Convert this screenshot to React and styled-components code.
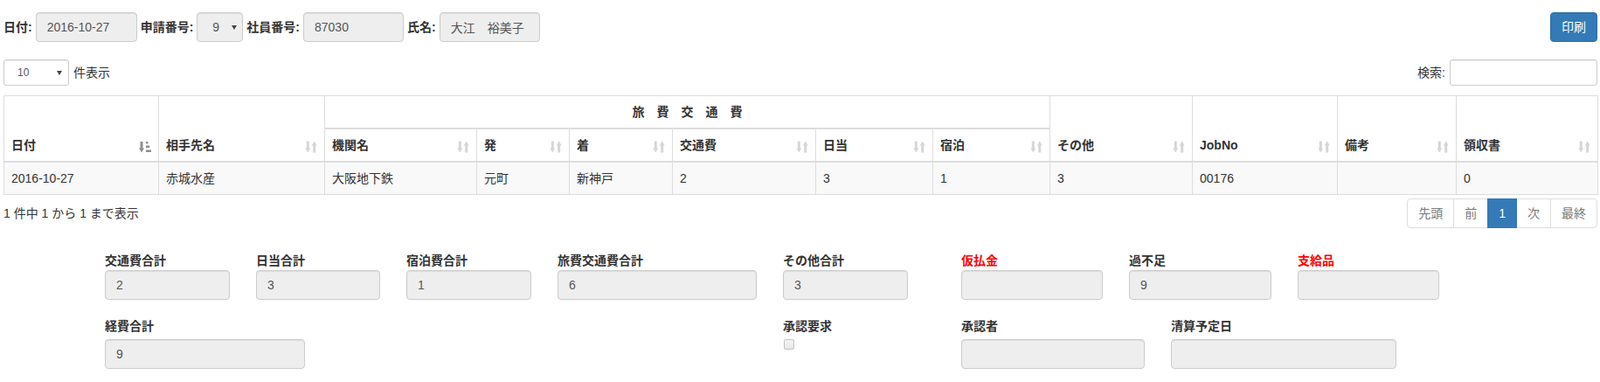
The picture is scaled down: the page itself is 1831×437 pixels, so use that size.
import React from "react";
import styled, { createGlobalStyle } from "styled-components";

const GlobalStyle = createGlobalStyle`
  html, body { margin: 0; padding: 0; background: #fff; }
  body {
    font-family: "Liberation Sans", "Noto Sans CJK JP", sans-serif;
    font-size: 14px;
    line-height: 20px;
    color: #333;
  }
  * { box-sizing: border-box; }
`;

const Page = styled.div`
  padding: 14px 3px 0 4px;
  width: 1831px;
`;

const TopBar = styled.div`
  display: flex;
  align-items: center;
  gap: 4px;
  height: 34px;
`;

const InlineLabel = styled.label`
  font-weight: bold;
  white-space: nowrap;
`;

const TextBox = styled.input`
  width: ${(p) => p.$w}px;
  height: ${(p) => (p.$sm ? 30 : 34)}px;
  padding: 6px 12px;
  font-family: inherit;
  font-size: 14px;
  line-height: 20px;
  color: #555;
  background: ${(p) => (p.$white ? "#fff" : "#eee")};
  border: 1px solid #ccc;
  border-radius: ${(p) => (p.$sm ? 3 : 4)}px;
  box-shadow: inset 0 1px 1px rgba(0, 0, 0, 0.075);
  outline: none;
  display: block;
`;

const SelectWrap = styled.div`
  position: relative;
  width: ${(p) => p.$w}px;
  height: ${(p) => p.$h}px;
`;

const Select = styled.select`
  appearance: none;
  -webkit-appearance: none;
  width: 100%;
  height: 100%;
  padding: 0 0 0 ${(p) => p.$pl}px;
  font-family: inherit;
  font-size: ${(p) => p.$fs}px;
  color: #555;
  opacity: 1;
  background: ${(p) => (p.$white ? "#fff" : "#eee")};
  border: 1px solid #ccc;
  border-radius: ${(p) => p.$r}px;
  box-shadow: inset 0 1px 1px rgba(0, 0, 0, 0.075);
  outline: none;
`;

const Caret = styled.span`
  position: absolute;
  top: 50%;
  right: ${(p) => p.$right}px;
  margin-top: -2px;
  width: 0;
  height: 0;
  border-left: 3.5px solid transparent;
  border-right: 3.5px solid transparent;
  border-top: 5px solid #444;
  pointer-events: none;
`;

const PrintButton = styled.button`
  margin-left: auto;
  height: 34px;
  padding: 6px 12px;
  font-family: inherit;
  font-size: 14px;
  line-height: 20px;
  color: #fff;
  background: #337ab7;
  border: 1px solid #2e6da4;
  border-radius: 4px;
`;

const ControlsRow = styled.div`
  display: flex;
  align-items: center;
  justify-content: space-between;
  margin-top: 20px;
  height: 30px;
`;

const Group = styled.div`
  display: flex;
  align-items: center;
  gap: 5px;
`;

const Table = styled.table`
  margin-top: 11px;
  width: 1824px;
  table-layout: fixed;
  border-collapse: collapse;
  border: 1px solid #ddd;
`;

const Th = styled.th`
  position: relative;
  padding: 8px ${(p) => (p.$group ? 8 : 30)}px 8px 8px;
  text-align: ${(p) => (p.$group ? "center" : "left")};
  vertical-align: bottom;
  font-weight: bold;
  line-height: 20px;
  border: 1px solid #ddd;
  border-bottom-width: 2px;
  white-space: nowrap;
`;

const Td = styled.td`
  padding: 8px;
  line-height: 20px;
  border: 1px solid #ddd;
  white-space: nowrap;
`;

const BodyRow = styled.tr`
  background: #f9f9f9;
`;

const IconBox = styled.svg`
  position: absolute;
  right: 8px;
  bottom: 9px;
  width: 14px;
  height: 14px;
`;

const SortIcon = ({ active }) => (
  <IconBox viewBox="0 0 14 14">
    {active ? (
      <g fill="#8f8f8f">
        <rect x="1.5" y="1" width="3" height="8" />
        <polygon points="0,8.5 6,8.5 3,13.5" />
        <rect x="8" y="1" width="2.5" height="2.5" />
        <rect x="8" y="5.5" width="4.2" height="2.5" />
        <rect x="8" y="10.5" width="6" height="2.5" />
      </g>
    ) : (
      <g fill="#d6d6d6">
        <rect x="1.8" y="0.5" width="3" height="8.5" />
        <polygon points="0.3,8.5 6.3,8.5 3.3,13.5" />
        <rect x="9.2" y="5" width="3" height="8.5" />
        <polygon points="7.7,5.5 13.7,5.5 10.7,0.5" />
      </g>
    )}
  </IconBox>
);

const Footer = styled.div`
  display: flex;
  align-items: center;
  justify-content: space-between;
  margin-top: 4px;
`;

const Info = styled.div`
  white-space: nowrap;
`;

const Pager = styled.ul`
  display: flex;
  margin: 0;
  padding: 0;
  list-style: none;
`;

const PageItem = styled.li`
  padding: 6px 12px;
  line-height: 20px;
  margin-left: -1px;
  border: 1px solid ${(p) => (p.$active ? "#337ab7" : "#ddd")};
  background: ${(p) => (p.$active ? "#337ab7" : "#fff")};
  color: ${(p) => (p.$active ? "#fff" : "#777")};
  position: ${(p) => (p.$active ? "relative" : "static")};
  &:first-child {
    margin-left: 0;
    border-radius: 4px 0 0 4px;
  }
  &:last-child {
    border-radius: 0 4px 4px 0;
  }
`;

const Totals = styled.div`
  margin-top: 27px;
  padding-left: 116px;
`;

const FormRow = styled.div`
  display: flex;
  gap: 30px;
  margin-bottom: ${(p) => p.$mb}px;
`;

const Field = styled.div`
  width: ${(p) => p.$w}px;
  margin-left: ${(p) => p.$ml || 0}px;
`;

const FieldLabel = styled.label`
  display: block;
  font-weight: bold;
  line-height: 20px;
  margin-bottom: ${(p) => p.$mb}px;
  color: ${(p) => (p.$red ? "#f00" : "#333")};
  white-space: nowrap;
`;

const FullInput = styled(TextBox)`
  width: 100%;
`;

const Check = styled.span`
  display: block;
  width: 12px;
  height: 12px;
  margin: 5px 0 0 1px;
  border: 1px solid #c4c4c4;
  border-radius: 2px;
  background: linear-gradient(#f4f4f4, #e6e6e6);
`;

const cols = [177, 190, 174, 106, 118, 164, 134, 134, 163, 166, 136, 162];

const row1 = [
  { label: "交通費合計", value: "2", w: 143 },
  { label: "日当合計", value: "3", w: 142 },
  { label: "宿泊費合計", value: "1", w: 143 },
  { label: "旅費交通費合計", value: "6", w: 228 },
  { label: "その他合計", value: "3", w: 143 },
  { label: "仮払金", value: "", w: 162, ml: 31, red: true },
  { label: "過不足", value: "9", w: 163 },
  { label: "支給品", value: "", w: 162, red: true },
];

export default function App() {
  return (
    <>
      <GlobalStyle />
      <Page>
        <TopBar>
          <InlineLabel>日付:</InlineLabel>
          <TextBox $w={116} readOnly value="2016-10-27" />
          <InlineLabel>申請番号:</InlineLabel>
          <SelectWrap $w={53} $h={34}>
            <Select $pl={17} $fs={14} $r={4} defaultValue="9">
              <option value="9">9</option>
            </Select>
            <Caret $right={7} />
          </SelectWrap>
          <InlineLabel>社員番号:</InlineLabel>
          <TextBox $w={115} readOnly value="87030" />
          <InlineLabel>氏名:</InlineLabel>
          <TextBox $w={115} readOnly value="大江　裕美子" />
          <PrintButton>印刷</PrintButton>
        </TopBar>

        <ControlsRow>
          <Group>
            <SelectWrap $w={75} $h={30}>
              <Select $pl={15} $fs={12} $r={3} $white defaultValue="10">
                <option value="10">10</option>
              </Select>
              <Caret $right={8} />
            </SelectWrap>
            <span>件表示</span>
          </Group>
          <Group>
            <span>検索:</span>
            <TextBox $w={169} $sm $white />
          </Group>
        </ControlsRow>

        <Table>
          <colgroup>
            {cols.map((w, i) => (
              <col key={i} style={{ width: w }} />
            ))}
          </colgroup>
          <thead>
            <tr>
              <Th rowSpan={2}>
                日付
                <SortIcon active />
              </Th>
              <Th rowSpan={2}>
                相手先名
                <SortIcon />
              </Th>
              <Th colSpan={6} $group>
                旅　費　交　通　費
              </Th>
              <Th rowSpan={2}>
                その他
                <SortIcon />
              </Th>
              <Th rowSpan={2}>
                JobNo
                <SortIcon />
              </Th>
              <Th rowSpan={2}>
                備考
                <SortIcon />
              </Th>
              <Th rowSpan={2}>
                領収書
                <SortIcon />
              </Th>
            </tr>
            <tr>
              {["機関名", "発", "着", "交通費", "日当", "宿泊"].map((h) => (
                <Th key={h}>
                  {h}
                  <SortIcon />
                </Th>
              ))}
            </tr>
          </thead>
          <tbody>
            <BodyRow>
              {["2016-10-27", "赤城水産", "大阪地下鉄", "元町", "新神戸", "2", "3", "1", "3", "00176", "", "0"].map(
                (v, i) => (
                  <Td key={i}>{v}</Td>
                )
              )}
            </BodyRow>
          </tbody>
        </Table>

        <Footer>
          <Info>1 件中 1 から 1 まで表示</Info>
          <Pager>
            <PageItem>先頭</PageItem>
            <PageItem>前</PageItem>
            <PageItem $active>1</PageItem>
            <PageItem>次</PageItem>
            <PageItem>最終</PageItem>
          </Pager>
        </Footer>

        <Totals>
          <FormRow $mb={20}>
            {row1.map((f) => (
              <Field key={f.label} $w={f.w} $ml={f.ml}>
                <FieldLabel $mb={1} $red={f.red}>
                  {f.label}
                </FieldLabel>
                <FullInput readOnly value={f.value} />
              </Field>
            ))}
          </FormRow>
          <FormRow $mb={0}>
            <Field $w={229}>
              <FieldLabel $mb={5}>経費合計</FieldLabel>
              <FullInput readOnly value="9" />
            </Field>
            <Field $w={174} $ml={517}>
              <FieldLabel $mb={5}>承認要求</FieldLabel>
              <Check />
            </Field>
            <Field $w={210}>
              <FieldLabel $mb={5}>承認者</FieldLabel>
              <FullInput readOnly value="" />
            </Field>
            <Field $w={258}>
              <FieldLabel $mb={5}>清算予定日</FieldLabel>
              <FullInput readOnly value="" />
            </Field>
          </FormRow>
        </Totals>
      </Page>
    </>
  );
}
